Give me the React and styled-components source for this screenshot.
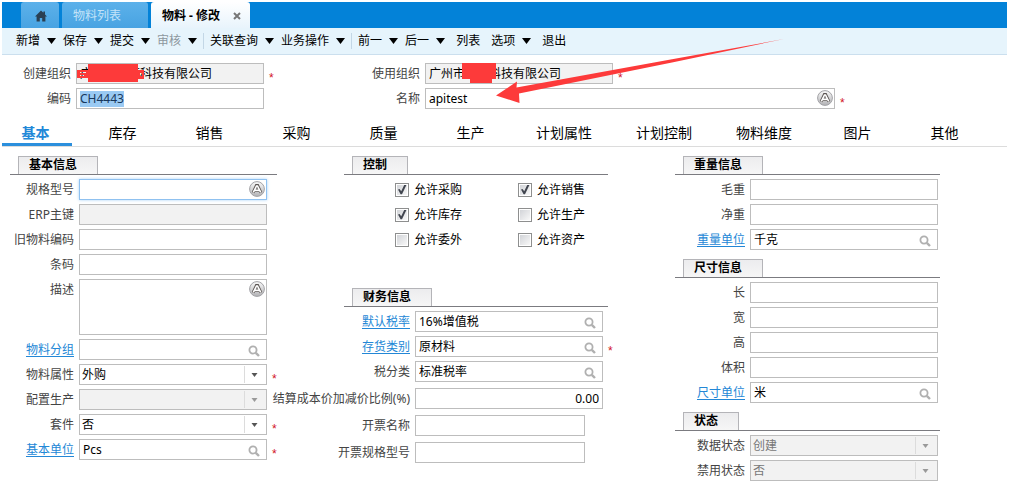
import React, { useEffect, useId, useRef } from "react";
import styled, { createGlobalStyle, css } from "styled-components";

const GlobalStyle = createGlobalStyle`
  * { box-sizing: border-box; }
  body {
    margin: 0;
    background: #fff;
    color: #000;
    font: 12px/16px "Noto Sans", "Noto Sans CJK SC", sans-serif;
  }
  button, input, select, textarea { font: inherit; color: inherit; }
`;

const Page = styled.div`
  position: relative;
  padding: 2px 2px 12px;
`;

const TitleBar = styled.header`
  display: flex;
  gap: 3px;
  height: 26px;
  padding-left: 19px;
  background: #0382d8;
`;

const WindowTab = styled.div`
  display: flex;
  align-items: center;
  justify-content: space-between;
  padding: 1px 9px 0 11px;
  border-radius: 3px 3px 0 0;
  background: linear-gradient(#5cb1ea, #48a3e2);
  color: #c3e3f8;
  ${(p) => p.$wide && css`min-width: 86px;`}
  ${(p) => p.$home && css`width: 38px; padding: 2px 0 0 1px; justify-content: center;`}
  ${(p) =>
    p.$active &&
    css`
      min-width: 99px;
      background: linear-gradient(#fff, #e8f4fc);
      color: #000;
      font-weight: bold;
    `}
`;

const PlainButton = styled.button`
  display: flex;
  align-items: center;
  padding: 0;
  border: 0;
  background: none;
  white-space: nowrap;
`;

const Toolbar = styled.div`
  display: flex;
  align-items: center;
  gap: 7px;
  height: 27px;
  padding-left: 14px;
  border-bottom: 1px solid #cbdfee;
  background: #e6f4fc;
`;

const ToolButton = styled(PlainButton)`
  gap: 7px;
  padding: 0 ${(p) => (p.$plain ? 4 : 0)}px;
  color: ${(p) => (p.disabled ? "#8d979e" : "#000")};
`;

const Separator = styled.span`
  width: 1px;
  height: 16px;
  margin: 0 -1px;
  background: #c3d7e6;
`;

const HeaderForm = styled.div`
  display: grid;
  grid-template-columns: 350fr 655fr;
  padding-top: 8px;
`;

const Stack = styled.div`
  display: flex;
  flex-direction: column;
  gap: ${(p) => p.$gap || 4}px;
  min-width: 0;
`;

const TabList = styled.nav`
  display: flex;
  gap: 17px;
  margin-top: 14px;
  border-bottom: 1px solid #dcdcdc;
`;

const Tab = styled.button`
  min-width: 70px;
  height: 23px;
  padding: 0 15px 0 12px;
  border: 0;
  border-bottom: 3px solid ${(p) => (p.$active ? "#2b8fdd" : "transparent")};
  background: none;
  font-size: 14px;
  line-height: 20px;
  white-space: nowrap;
  font-weight: ${(p) => (p.$active ? "bold" : "normal")};
  color: ${(p) => (p.$active ? "#2288d8" : "#000")};
`;

const Columns = styled.main`
  display: grid;
  grid-template-columns: 334fr 331fr 332fr;
  padding: 9px 0 0 8px;
`;

const Column = styled.div`
  display: flex;
  flex-direction: column;
  gap: 9px;
  padding-right: 67px;
  min-width: 0;
`;

const Section = styled.section`
  display: flex;
  flex-direction: column;
  gap: 4px;
  padding-bottom: ${(p) => p.$after || 0}px;
`;

const SectionHead = styled.div`
  display: flex;
  height: 19px;
  padding-left: 8px;
  border-bottom: 1px solid #7b7b80;
`;

const SectionTitle = styled.h2`
  margin: 0;
  padding: 0 20px 0 10px;
  border: 1px solid #b4b4b8;
  border-bottom: 0;
  background: linear-gradient(#ececee, #f6f6f6);
  font-size: 12px;
  line-height: 16px;
`;

const Row = styled.div`
  display: flex;
  gap: 5px;
`;

const Label = styled.label`
  display: flex;
  flex: none;
  justify-content: flex-end;
  width: ${(p) => p.$width}px;
  line-height: 21px;
  white-space: nowrap;
  color: #444;
`;

const LabelLink = styled.a`
  color: #2387d6;
  text-decoration: underline;
  text-underline-offset: 2px;
`;

const Box = styled.div`
  position: relative;
  display: flex;
  flex: none;
  width: ${(p) => p.$width}px;
  height: ${(p) => p.$height}px;
  border: 1px solid ${(p) => (p.$lit ? "#8fc1f0" : "#bdbdbd")};
  background: ${(p) => (p.$off ? "#f2f2f2" : "#fff")};
  box-shadow: ${(p) => (p.$lit ? "0 0 3px #a9d2f7" : "none")};
`;

const fieldText = css`
  flex: 1;
  min-width: 0;
  margin: 0;
  border: 0;
  outline: 0;
  background: none;
  appearance: none;
  opacity: 1;
`;

const TextInput = styled.input`
  ${fieldText}
  padding: 0 3px;
  line-height: 16px;
  text-align: ${(p) => p.$align || "left"};
  &::selection { background: rgba(153, 201, 243, 0.99); color: #17375c; }
`;

const TextArea = styled.textarea`
  ${fieldText}
  padding: 1px 3px;
  resize: none;
`;

const Select = styled.select`
  ${fieldText}
  padding: 0 24px 0 2px;
  color: ${(p) => (p.disabled ? "#777" : "#000")};
`;

const Caret = styled.span`
  position: absolute;
  top: 1px;
  right: 0;
  bottom: 1px;
  display: flex;
  align-items: center;
  width: 22px;
  padding-left: 6px;
  border-left: 1px solid #dcdcdc;
  color: ${(p) => (p.$off ? "#999" : "#555")};
  pointer-events: none;
`;

const LookupButton = styled(PlainButton)`
  align-items: flex-end;
  padding: 0 6px 2px 0;
  color: #b0b0b0;
`;

const LanguageButton = styled(PlainButton)`
  align-items: flex-start;
  padding: 1px 1px 0 0;
`;

const Required = styled.span`
  height: 21px;
  padding-top: 7px;
  font-family: "Liberation Sans", sans-serif;
  color: #d2141e;
`;

const Checks = styled.div`
  display: grid;
  grid-template-columns: 123px 1fr;
  row-gap: 4px;
  padding-left: 51px;
`;

const CheckLabel = styled.label`
  display: flex;
  align-items: center;
  gap: 5px;
  height: 21px;
  white-space: nowrap;
`;

const Checkbox = styled.input`
  appearance: none;
  width: 14px;
  height: 14px;
  margin: 0;
  padding: 1px;
  border: 1px solid #8e8f8f;
  background: linear-gradient(135deg, #d2d4d8, #f8f8f8) content-box, #fff;
  &:checked::before {
    content: "";
    display: block;
    width: 10px;
    height: 10px;
    background: #41454f;
    clip-path: polygon(10% 50%, 26% 44%, 42% 68%, 72% 4%, 94% 4%, 50% 98%, 36% 98%);
  }
`;

const Markup = styled.svg`
  position: absolute;
  top: 0;
  left: 0;
  pointer-events: none;
`;

const Down = ({ width = 9, height = 6 }) => (
  <svg width={width} height={height} viewBox="0 0 9 6" fill="currentColor" aria-hidden="true">
    <path d="M0 0H9L4.5 6Z" />
  </svg>
);

const HomeIcon = () => (
  <svg width="12" height="12" viewBox="0 0 12 12" fill="#2a3f52" role="img" aria-label="首页">
    <path d="M6 .5 8.4 2.8V1.4H10V4.4L12 6.4H10.4V11.5H7.2V8H4.8V11.5H1.6V6.4H0Z" />
  </svg>
);

const SearchIcon = () => (
  <svg width="12" height="12" viewBox="0 0 12 12" fill="none" stroke="currentColor" aria-hidden="true">
    <circle cx="5" cy="5" r="3.6" strokeWidth="1.8" />
    <path d="M7.8 7.8 11 11" strokeWidth="2.4" />
  </svg>
);

const LanguageIcon = () => (
  <svg width="16" height="16" viewBox="0 0 16 16" fill="none" aria-hidden="true">
    <defs>
      <linearGradient id="disc" x1="0" y1="0" x2="0" y2="1">
        <stop offset="0" stopColor="#fafafa" />
        <stop offset="1" stopColor="#b2b2b5" />
      </linearGradient>
    </defs>
    <circle cx="8" cy="8" r="7.4" fill="url(#disc)" stroke="#a2a2a6" />
    <path d="M4.1 11.6 7.4 4.6H8.6L11.9 11.6M5.8 9.4H10.2" stroke="#5a5452" strokeWidth="3" />
    <path d="M4.3 11.4 7.5 5H8.5L11.7 11.4M5.8 9.4H10.2" stroke="#fff" strokeWidth="1.6" />
  </svg>
);

function Field({ label, lw, link, kind, value = "", width = 188, disabled, required, lit, align, selected }) {
  const id = useId();
  const ref = useRef(null);
  useEffect(() => {
    if (selected && ref.current) {
      ref.current.focus();
      ref.current.select();
    }
  }, [selected]);

  return (
    <Row>
      <Label htmlFor={id} $width={lw}>
        {link ? <LabelLink href="#">{label}</LabelLink> : label}
      </Label>
      <Box $width={width} $height={kind === "area" ? 56 : 21} $off={disabled} $lit={lit}>
        {kind === "select" ? (
          <>
            <Select id={id} disabled={disabled} defaultValue={value}>
              <option>{value}</option>
            </Select>
            <Caret $off={disabled}><Down width={7} height={4} /></Caret>
          </>
        ) : kind === "area" ? (
          <TextArea id={id} />
        ) : (
          <TextInput ref={ref} id={id} defaultValue={value} disabled={disabled} $align={align} />
        )}
        {kind === "lookup" && (
          <LookupButton aria-label="查找"><SearchIcon /></LookupButton>
        )}
        {(kind === "lang" || kind === "area") && (
          <LanguageButton aria-label="多语言"><LanguageIcon /></LanguageButton>
        )}
      </Box>
      {required && <Required>*</Required>}
    </Row>
  );
}

function Group({ title, after, children }) {
  return (
    <Section $after={after}>
      <SectionHead><SectionTitle>{title}</SectionTitle></SectionHead>
      {children}
    </Section>
  );
}

const tools = [
  { text: "新增", menu: true },
  { text: "保存", menu: true },
  { text: "提交", menu: true },
  { text: "审核", menu: true, disabled: true },
  null,
  { text: "关联查询", menu: true },
  { text: "业务操作", menu: true },
  null,
  { text: "前一", menu: true },
  { text: "后一", menu: true },
  { text: "列表" },
  { text: "选项", menu: true },
  { text: "退出" },
];

const tabs = ["基本", "库存", "销售", "采购", "质量", "生产", "计划属性", "计划控制", "物料维度", "图片", "其他"];

const permissions = [
  ["允许采购", true],
  ["允许销售", true],
  ["允许库存", true],
  ["允许生产", false],
  ["允许委外", false],
  ["允许资产", false],
];

const DownBlack = styled.span`
  display: flex;
  color: #000;
`;

export default function App() {
  return (
    <Page>
      <GlobalStyle />
      <TitleBar>
        <WindowTab $home><HomeIcon /></WindowTab>
        <WindowTab $wide>物料列表</WindowTab>
        <WindowTab $active>
          物料 - 修改
          <PlainButton aria-label="关闭">
            <svg width="8" height="8" viewBox="0 0 8 8" stroke="#777" strokeWidth="2">
              <path d="M1 1 7 7M7 1 1 7" />
            </svg>
          </PlainButton>
        </WindowTab>
      </TitleBar>
      <Toolbar>
        {tools.map((t, i) =>
          t ? (
            <ToolButton key={t.text} disabled={t.disabled} $plain={!t.menu}>
              {t.text}
              {t.menu && <DownBlack><Down /></DownBlack>}
            </ToolButton>
          ) : (
            <Separator key={i} />
          )
        )}
      </Toolbar>

      <HeaderForm>
        <Stack>
          <Field lw={69} label="创建组织" value="广州市某某科技有限公司" disabled required />
          <Field lw={69} label="编码" value="CH4443" selected />
        </Stack>
        <Stack>
          <Field lw={68} label="使用组织" value="广州市某某科技有限公司" disabled required />
          <Field lw={68} label="名称" value="apitest" kind="lang" width={410} required />
        </Stack>
      </HeaderForm>

      <TabList>
        {tabs.map((t, i) => (
          <Tab key={t} $active={i === 0}>{t}</Tab>
        ))}
      </TabList>

      <Columns>
        <Column>
          <Group title="基本信息">
            <Field lw={64} label="规格型号" kind="lang" lit />
            <Field lw={64} label="ERP主键" disabled />
            <Field lw={64} label="旧物料编码" />
            <Field lw={64} label="条码" />
            <Field lw={64} label="描述" kind="area" />
            <Field lw={64} label="物料分组" kind="lookup" link />
            <Field lw={64} label="物料属性" kind="select" value="外购" required />
            <Field lw={64} label="配置生产" kind="select" disabled />
            <Field lw={64} label="套件" kind="select" value="否" required />
            <Field lw={64} label="基本单位" kind="lookup" value="Pcs" link required />
          </Group>
        </Column>

        <Column>
          <Group title="控制" after={29}>
            <Checks>
              {permissions.map(([text, on]) => (
                <CheckLabel key={text}>
                  <Checkbox type="checkbox" defaultChecked={on} />
                  {text}
                </CheckLabel>
              ))}
            </Checks>
          </Group>
          <Group title="财务信息">
            <Stack $gap={6}>
              <Stack>
                <Field lw={66} label="默认税率" kind="lookup" value="16%增值税" link />
                <Field lw={66} label="存货类别" kind="lookup" value="原材料" link required />
                <Field lw={66} label="税分类" kind="lookup" value="标准税率" />
              </Stack>
              <Field lw={66} label="结算成本价加减价比例(%)" value="0.00" align="right" />
              <Field lw={66} label="开票名称" width={170} />
              <Field lw={66} label="开票规格型号" width={170} />
            </Stack>
          </Group>
        </Column>

        <Column>
          <Group title="重量信息">
            <Field lw={70} label="毛重" />
            <Field lw={70} label="净重" />
            <Field lw={70} label="重量单位" kind="lookup" value="千克" link />
          </Group>
          <Group title="尺寸信息">
            <Field lw={70} label="长" />
            <Field lw={70} label="宽" />
            <Field lw={70} label="高" />
            <Field lw={70} label="体积" />
            <Field lw={70} label="尺寸单位" kind="lookup" value="米" link />
          </Group>
          <Group title="状态">
            <Field lw={70} label="数据状态" kind="select" value="创建" disabled />
            <Field lw={70} label="禁用状态" kind="select" value="否" disabled />
          </Group>
        </Column>
      </Columns>

      <Markup width="800" height="110" viewBox="0 0 800 110" fill="#fd3a3a" aria-hidden="true">
        <path d="M88 64H138V70H144V79H138V82H88V78H77V70H88ZM80 72V73H86V72ZM80 75V76H84V75ZM140 73V76H142V73Z" fillRule="evenodd" />
        <path d="M462 63H496V79H492V83H470V79H462Z" />
        <path d="M784 39 672 62.5 519 93.5 519.5 103 496 95.5 517 81.5 516.5 87.5 672 59.3Z" />
      </Markup>
    </Page>
  );
}
